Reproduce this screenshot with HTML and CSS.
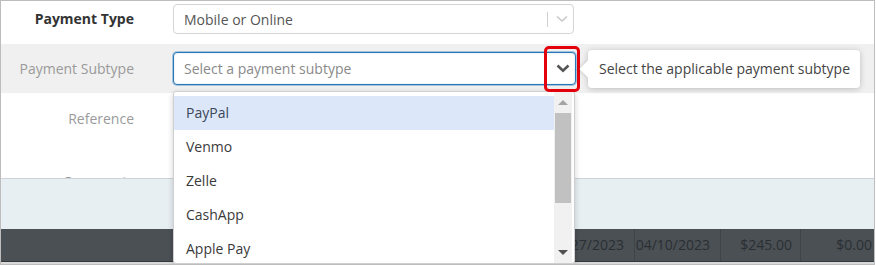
FILE: index.html
```html
<!DOCTYPE html>
<html>
<head>
<meta charset="utf-8">
<link rel="stylesheet" href="styles.css">
</head>
<body>
<div class="frame">
  <div class="row row-type">
    <div class="label label-strong">Payment Type</div>
    <div class="select select-plain">
      <span class="select-value">Mobile or Online</span>
      <span class="select-divider"></span>
      <svg class="chev chev-light" width="12" height="8" viewBox="0 0 12 8"><path d="M1 1.5 L6 6 L11 1.5" fill="none" stroke="#c8c8c8" stroke-width="1.6"/></svg>
    </div>
  </div>
  <div class="row row-subtype">
    <div class="label">Payment Subtype</div>
    <div class="select select-focus">
      <span class="select-placeholder">Select a payment subtype</span>
      <svg class="chev chev-dark" width="14" height="9" viewBox="0 0 14 9"><path d="M1.5 1.5 L7 6.8 L12.5 1.5" fill="none" stroke="#555" stroke-width="2.6"/></svg>
    </div>
  </div>
  <div class="row-block">
    <div class="label label-ref">Reference</div>
    <div class="label label-cut">Comments</div>
  </div>
  <div class="band"></div>
  <div class="table-row">
    <div class="cell cell-fill">03/27/2023</div>
    <div class="cell cell-date">04/10/2023</div>
    <div class="cell cell-amt">$245.00</div>
    <div class="cell cell-last">$0.00</div>
  </div>

  <div class="dropdown">
    <ul class="options">
      <li class="opt opt-active">PayPal</li>
      <li class="opt">Venmo</li>
      <li class="opt">Zelle</li>
      <li class="opt">CashApp</li>
      <li class="opt">Apple Pay</li>
    </ul>
    <div class="scrollbar">
      <div class="sb-btn"><span class="tri-up"></span></div>
      <div class="sb-thumb"></div>
      <div class="sb-space"></div>
      <div class="sb-btn"><span class="tri-down"></span></div>
    </div>
  </div>

  <div class="highlight"></div>

  <div class="tooltip">Select the applicable payment subtype</div>
</div>
</body>
</html>
```

FILE: styles.css
```css
* { box-sizing: border-box; }
html, body { margin: 0; padding: 0; background: #fff; }
body { font-family: "Open Sans", "Liberation Sans", sans-serif; font-size: 14px; color: #333; }

.frame {
  position: relative;
  width: 875px;
  height: 265px;
  border: 1px solid #bdbdbd;
  background: #d9d9d9;
  overflow: hidden;
}

.row {
  display: grid;
  grid-template-columns: 133px auto;
  column-gap: 39px;
  align-items: center;
  background: #fff;
}
.row-type { height: 43px; padding-top: 3px; align-items: start; }
.row-subtype { height: 49px; padding-top: 8px; align-items: start; background: #f0f0f0; }

.label {
  text-align: right;
  color: #9a9a9a;
  line-height: 20px;
  white-space: nowrap;
}
.label-strong { color: #333; font-weight: 700; line-height: 30px; }
.row-subtype .label { line-height: 33px; }

.select {
  display: flex;
  align-items: center;
  border-radius: 4px;
  background: #fff;
  padding-left: 10px;
}
.select-plain {
  width: 401px;
  height: 30px;
  border: 1px solid #d4d4d4;
}
.select-value { color: #555; flex: 1; }
.select-divider {
  width: 1px;
  height: 15px;
  background: #d0d0d0;
  margin-right: 8px;
}
.chev-light { margin-right: 5px; }

.select-focus {
  width: 403px;
  height: 33px;
  border: 1px solid #2a78b5;
  box-shadow: 0 0 0 1px rgba(70, 140, 200, 0.45), inset 0 0 2px rgba(70,140,200,0.3);
}
.select-placeholder { color: #8a8a8a; flex: 1; }
.chev-dark { margin-right: 5px; }

.row-block {
  height: 85px;
  background: #fff;
  overflow: hidden;
  padding-top: 16px;
}
.label-ref, .label-cut { width: 133px; }
.label-cut { margin-top: 43px; }

.band {
  height: 51px;
  border-top: 1px solid #cdd3d7;
  background: #e8eff3;
}

.table-row {
  display: flex;
  height: 33px;
  background: #4b5054;
  border-bottom: 1px solid #35393c;
  color: #2a2f33;
  line-height: 32px;
}
.cell {
  white-space: nowrap;
  border-right: 1px solid #3f4447;
  padding-right: 10px;
  text-align: right;
}
.cell-fill { width: 634px; }
.cell-date { width: 86px; padding-right: 10px; }
.cell-amt { width: 80px; padding-right: 8px; }
.cell-last { flex: 1; border-right: none; padding-right: 2px; }

.dropdown {
  position: absolute;
  left: 172px;
  top: 90px;
  width: 402px;
  height: 173px;
  background: #fff;
  border: 1px solid #cfcfcf;
  border-radius: 3px;
  box-shadow: 0 2px 6px rgba(0,0,0,0.18);
  display: flex;
}
.options {
  list-style: none;
  margin: 0;
  padding: 4px 0 0;
  flex: 1;
}
.opt {
  height: 34px;
  line-height: 34px;
  padding-left: 12px;
  color: #3a3a3a;
}
.opt-active { background: #dce8fa; color: #3b4656; }

.scrollbar {
  width: 18px;
  margin-right: 2px;
  background: #f1f1f1;
  display: flex;
  flex-direction: column;
}
.sb-btn {
  height: 21px;
  display: flex;
  align-items: center;
  justify-content: center;
}
.tri-up, .tri-down {
  width: 0; height: 0;
  border-left: 5px solid transparent;
  border-right: 5px solid transparent;
}
.tri-up { border-bottom: 5px solid #a3a3a3; }
.tri-down { border-top: 5px solid #505050; }
.sb-thumb {
  height: 90px;
  margin: 0 1px;
  background: #c1c1c1;
}
.sb-space { flex: 1; }

.highlight {
  position: absolute;
  left: 543px;
  top: 45px;
  width: 36px;
  height: 46px;
  border: 3px solid #e3000b;
  border-radius: 5px;
}

.tooltip {
  position: absolute;
  left: 587px;
  top: 49px;
  width: 272px;
  height: 38px;
  background: #fff;
  border-radius: 4px;
  box-shadow: 0 1px 6px rgba(0,0,0,0.22);
  color: #444;
  line-height: 38px;
  padding-left: 11px;
  white-space: nowrap;
}
.tooltip::before {
  content: "";
  position: absolute;
  left: -6px;
  top: 13px;
  width: 12px;
  height: 12px;
  background: #fff;
  transform: rotate(45deg);
  box-shadow: -2px 2px 3px rgba(0,0,0,0.08);
}
```
